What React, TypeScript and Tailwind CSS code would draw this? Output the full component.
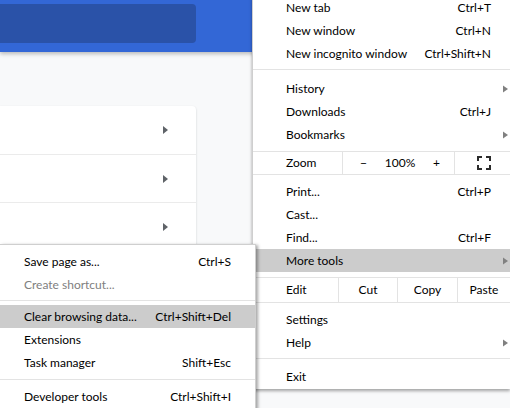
import React from "react";

const MenuArrow = () => (
  <svg width="5" height="8" viewBox="0 0 5 8" className="block">
    <path d="M0 0.5L5 4L0 7.5Z" fill="#808080" />
  </svg>
);

const CardArrow = () => (
  <svg width="5" height="8" viewBox="0 0 5 8" className="block">
    <path d="M0 0L5 4L0 8Z" fill="#5f6368" />
  </svg>
);

const FullscreenIcon = () => (
  <svg width="14" height="14" viewBox="0 0 14 14" className="block">
    <path
      d="M1 5V1H5M9 1H13V5M13 9V13H9M5 13H1V9"
      fill="none"
      stroke="#2b2b2b"
      strokeWidth="2"
    />
  </svg>
);

type Item = { label: string; shortcut?: string; arrow?: boolean; hl?: boolean; dim?: boolean };

const MainItem = ({ label, shortcut, arrow, hl }: Item) => (
  <div
    className={
      "flex items-center h-[23px] pl-[33px] " +
      (arrow ? "pr-[2px] " : "pr-[19px] ") +
      (hl ? "bg-[#cccccc]" : "")
    }
  >
    <span className="flex-1">{label}</span>
    {shortcut && <span>{shortcut}</span>}
    {arrow && <MenuArrow />}
  </div>
);

const SubItem = ({ label, shortcut, hl, dim }: Item) => (
  <div
    className={
      "flex items-center h-[23px] pl-[24px] pr-[24px] " +
      (hl ? "bg-[#cccccc] " : "") +
      (dim ? "text-[#808080]" : "")
    }
  >
    <span className="flex-1">{label}</span>
    {shortcut && <span>{shortcut}</span>}
  </div>
);

const Sep = ({ top, bottom }: { top: string; bottom: string }) => (
  <div className={top + " " + bottom}>
    <div className="h-px bg-[#e3e3e3]" />
  </div>
);

export default function App() {
  return (
    <div className="relative w-[510px] h-[408px] overflow-hidden bg-[#f8f9fa] font-['Lato',sans-serif] text-[12px] text-black">
      {/* Background page */}
      <div className="relative z-10 h-[52px] bg-[#3367d6] pt-[4px] shadow-[0_2px_4px_rgba(0,0,0,0.25)]">
        <div className="w-[196px] h-[39px] rounded-r-[4px] bg-[#2a52a8]" />
      </div>
      <div className="pt-[54px]">
        <div className="w-[196px] bg-white rounded-tr-[4px] shadow-[0_1px_2px_rgba(60,64,67,0.25)]">
          <div className="h-[49px] flex items-center justify-end pr-[28px] border-b border-[#ebebeb]">
            <CardArrow />
          </div>
          <div className="h-[48px] flex items-center justify-end pr-[28px] border-b border-[#ebebeb]">
            <CardArrow />
          </div>
          <div className="h-[48px] flex items-center justify-end pr-[28px]">
            <CardArrow />
          </div>
          <div className="h-[120px]" />
        </div>
      </div>

      {/* Main menu */}
      <div className="absolute z-20 left-[252px] top-[-4px] w-[258px] bg-white border-l border-[#cfcfcf] pb-[1px] shadow-[0_2px_3px_rgba(0,0,0,0.35)]">
        <MainItem label="New tab" shortcut="Ctrl+T" />
        <MainItem label="New window" shortcut="Ctrl+N" />
        <MainItem label="New incognito window" shortcut="Ctrl+Shift+N" />
        <Sep top="pt-[4px]" bottom="pb-[7px]" />
        <MainItem label="History" arrow />
        <MainItem label="Downloads" shortcut="Ctrl+J" />
        <MainItem label="Bookmarks" arrow />
        <div className="mt-[5px] flex h-[24px] border-y border-[#e3e3e3]">
          <div className="w-[89px] pl-[33px] flex items-center">Zoom</div>
          <div className="w-[112px] border-l border-[#e3e3e3] flex items-center justify-between pl-[17px] pr-[14px]">
            <span>−</span>
            <span>100%</span>
            <span>+</span>
          </div>
          <div className="flex-1 border-l border-[#e3e3e3] flex items-center justify-center pl-[2px]">
            <FullscreenIcon />
          </div>
        </div>
        <div className="h-[5px]" />
        <MainItem label="Print..." shortcut="Ctrl+P" />
        <MainItem label="Cast..." />
        <MainItem label="Find..." shortcut="Ctrl+F" />
        <MainItem label="More tools" arrow hl />
        <div className="mt-[5px] flex h-[26px] border-y border-[#e3e3e3]">
          <div className="w-[85px] pl-[33px] flex items-center">Edit</div>
          <div className="w-[59px] border-l border-[#e3e3e3] flex items-center justify-center">Cut</div>
          <div className="w-[60px] border-l border-[#e3e3e3] flex items-center justify-center">Copy</div>
          <div className="flex-1 border-l border-[#e3e3e3] flex items-center justify-center">Paste</div>
        </div>
        <div className="h-[5px]" />
        <MainItem label="Settings" />
        <MainItem label="Help" arrow />
        <Sep top="pt-[4px]" bottom="pb-[6px]" />
        <MainItem label="Exit" />
      </div>

      {/* Submenu */}
      <div className="absolute z-30 left-0 top-[244px] w-[256px] h-[180px] bg-white border-t border-r border-[#cfcfcf] pt-[5px] shadow-[2px_1px_3px_rgba(0,0,0,0.35)]">
        <SubItem label="Save page as..." shortcut="Ctrl+S" />
        <SubItem label="Create shortcut..." dim />
        <Sep top="pt-[4px]" bottom="pb-[4px]" />
        <SubItem label="Clear browsing data..." shortcut="Ctrl+Shift+Del" hl />
        <SubItem label="Extensions" />
        <SubItem label="Task manager" shortcut="Shift+Esc" />
        <Sep top="pt-[5px]" bottom="pb-[5px]" />
        <SubItem label="Developer tools" shortcut="Ctrl+Shift+I" />
      </div>
    </div>
  );
}
